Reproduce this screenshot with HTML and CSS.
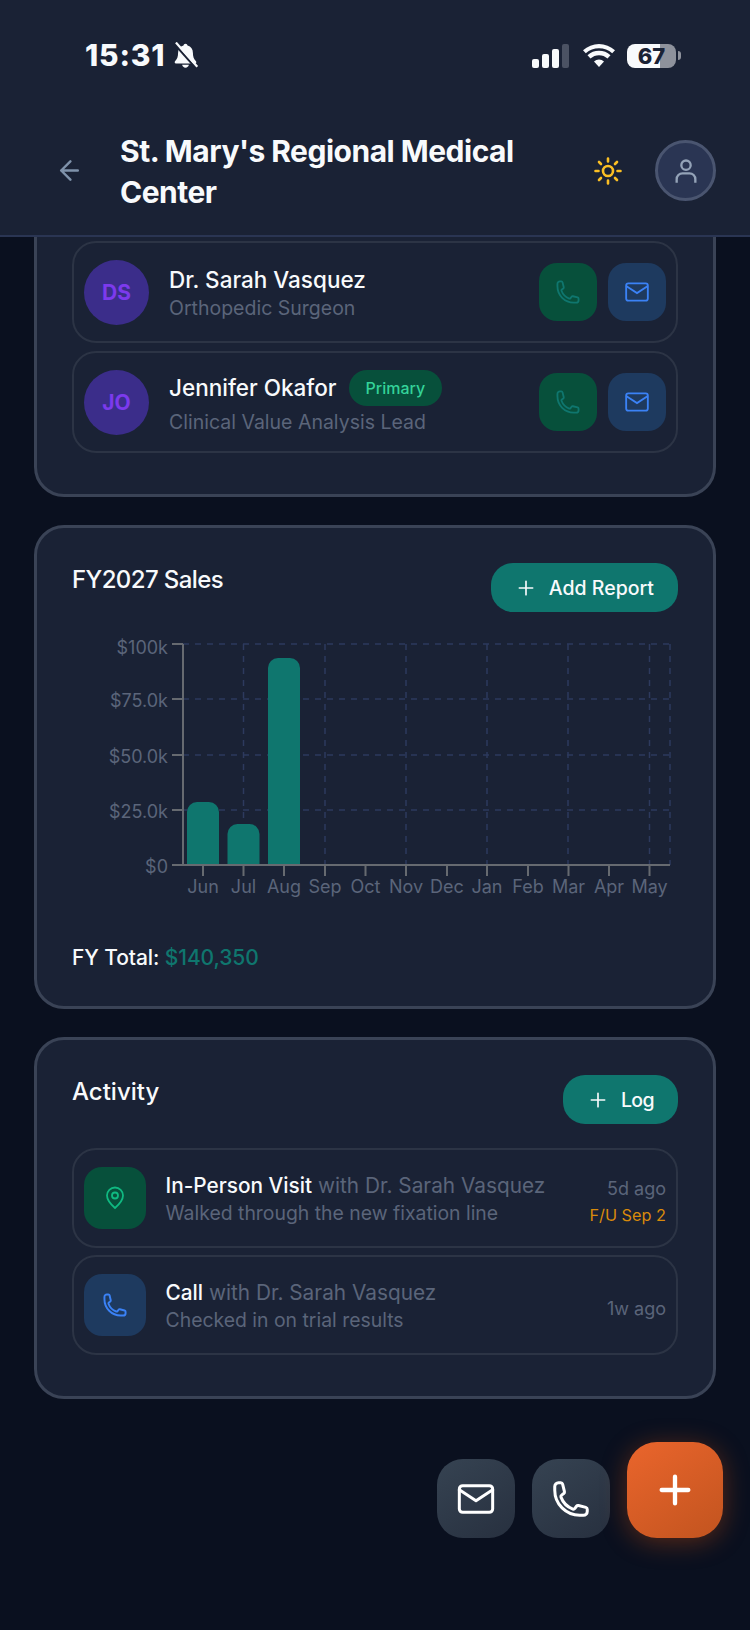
FILE: index.html
```html
<!DOCTYPE html>
<html lang="en">
<head>
    <meta charset="UTF-8">
    <meta name="viewport" content="width=device-width, initial-scale=1.0">
    <title>St. Mary's Regional Medical Center</title>
    <link rel="stylesheet" href="styles.css">
</head>
<body>
    <svg class="icon-defs" aria-hidden="true">
        <symbol id="i-phone" viewBox="0 0 24 24">
            <path d="M2.25 6.75c0 8.284 6.716 15 15 15h2.25a2.25 2.25 0 0 0 2.25-2.25v-1.372c0-.516-.351-.966-.852-1.091l-4.423-1.106c-.44-.11-.902.055-1.173.417l-.97 1.293c-.282.376-.769.542-1.21.38a12.035 12.035 0 0 1-7.143-7.143c-.162-.441.004-.928.38-1.21l1.293-.97c.363-.271.527-.734.417-1.173L6.963 3.102a1.125 1.125 0 0 0-1.091-.852H4.5A2.25 2.25 0 0 0 2.25 4.5v2.25Z"/>
        </symbol>
        <symbol id="i-mail" viewBox="0 0 24 24">
            <rect x="2" y="4" width="20" height="16" rx="2"/>
            <path d="M2 6.5l10 6.5 10-6.5"/>
        </symbol>
        <symbol id="i-plus" viewBox="0 0 24 24">
            <path d="M12 4v16M4 12h16"/>
        </symbol>
    </svg>

    <header class="app-header">
        <div class="status-bar">
            <div class="status-left">
                <span class="status-time">15:31</span>
                <svg class="bell-off" viewBox="0 0 24 24">
                    <path d="M12 1.500c-1 0-1.700.7-1.800 1.700C7 4 5.400 6.600 5.400 9.800c0 3.400-.8 5.400-2.700 7.300-.7.7-.3 1.900.8 1.900h17c1.100 0 1.500-1.200.8-1.900-1.900-1.900-2.700-3.900-2.700-7.300 0-3.200-1.600-5.800-4.800-6.600-.1-1-.8-1.700-1.800-1.700zM9 20.200c.3 1.500 1.500 2.600 3 2.600s2.700-1.100 3-2.600z"/>
                    <path class="bell-gap" d="M2 1.500l19 21.500"/>
                    <path class="bell-slash" d="M3.500 .5l19 21.500"/>
                </svg>
            </div>
            <div class="status-right">
                <svg class="signal" viewBox="0 0 37 24">
                    <rect x="0" y="15" width="7" height="9" rx="2"/>
                    <rect x="10" y="10" width="7" height="14" rx="2"/>
                    <rect x="20" y="5" width="7" height="19" rx="2"/>
                    <rect class="signal-off" x="30" y="0" width="7" height="24" rx="2"/>
                </svg>
                <svg class="wifi" viewBox="0 0 32 23">
                    <path d="M16 23l-5-5.500a7.500 7.500 0 0 1 10 0z"/>
                    <path d="M7.500 14.500l-3-3.300a17 17 0 0 1 23 0l-3 3.300a12.500 12.500 0 0 0-17 0z"/>
                    <path d="M2.800 9.300L0 6.200a24 24 0 0 1 32 0l-2.800 3.100a20 20 0 0 0-26.400 0z"/>
                </svg>
                <div class="battery"><span class="battery-level">67</span><span class="battery-nub"></span></div>
            </div>
        </div>
        <div class="nav-bar">
            <svg class="back-icon" viewBox="0 0 24 24">
                <path d="M21.500 12H2.500M13 1.500L2.500 12 13 22.500"/>
            </svg>
            <h1 class="nav-title">St. Mary's Regional Medical Center</h1>
            <svg class="sun-icon" viewBox="0 0 28 28">
                <circle cx="14" cy="14" r="5"/>
                <path d="M14 1.500v3M14 23.500v3M1.500 14h3M23.500 14h3M5 5l2 2M21 21l2 2M5 23l2-2M21 7l2-2"/>
            </svg>
            <div class="profile-btn">
                <svg viewBox="0 0 24 24">
                    <circle cx="12" cy="7" r="4"/>
                    <path d="M4 22v-3a5 5 0 0 1 5-5h6a5 5 0 0 1 5 5v3"/>
                </svg>
            </div>
        </div>
    </header>

    <main class="content">
        <section class="card card-scrolled">
            <div class="list list-tight">
                <div class="contact-row">
                    <div class="avatar">DS</div>
                    <div class="contact-info">
                        <div class="contact-name">Dr. Sarah Vasquez</div>
                        <div class="contact-role">Orthopedic Surgeon</div>
                    </div>
                    <div class="action-btn action-green"><svg><use href="#i-phone"/></svg></div>
                    <div class="action-btn action-blue"><svg><use href="#i-mail"/></svg></div>
                </div>
                <div class="contact-row">
                    <div class="avatar">JO</div>
                    <div class="contact-info">
                        <div class="contact-name">Jennifer Okafor <span class="badge">Primary</span></div>
                        <div class="contact-role">Clinical Value Analysis Lead</div>
                    </div>
                    <div class="action-btn action-green"><svg><use href="#i-phone"/></svg></div>
                    <div class="action-btn action-blue"><svg><use href="#i-mail"/></svg></div>
                </div>
            </div>
        </section>

        <section class="card">
            <div class="card-head">
                <h2 class="card-title card-title-tight">FY2027 Sales</h2>
                <div class="add-btn"><svg><use href="#i-plus"/></svg>Add Report</div>
            </div>
            <svg class="chart" width="606" height="300" viewBox="0 0 606 300">
                <g class="grid">
                    <path d="M111 14H598M111 69H598M111 125H598M111 180H598"/>
                    <path d="M171.500 14V235M253 14V235M334 14V235M415 14V235M496 14V235M577.500 14V235M598 14V235"/>
                </g>
                <g class="bars">
                    <path d="M115 235V182a10 10 0 0 1 10-10h12a10 10 0 0 1 10 10v53z"/>
                    <path d="M155.500 235V204a10 10 0 0 1 10-10h12a10 10 0 0 1 10 10v31z"/>
                    <path d="M196 235V38a10 10 0 0 1 10-10h12a10 10 0 0 1 10 10v197z"/>
                </g>
                <path class="axis" d="M111 14V235H598M100 14H111M100 69H111M100 125H111M100 180H111M100 235H111M131 235V246M171.500 235V246M212 235V246M253 235V246M293.500 235V246M334 235V246M375 235V246M415 235V246M456 235V246M496.500 235V246M537 235V246M577.500 235V246"/>
                <g class="y-labels">
                    <text x="96" y="24">$100k</text>
                    <text x="96" y="77">$75.0k</text>
                    <text x="96" y="133">$50.0k</text>
                    <text x="96" y="188">$25.0k</text>
                    <text x="96" y="243">$0</text>
                </g>
                <g class="x-labels">
                    <text x="131" y="263">Jun</text>
                    <text x="171.500" y="263">Jul</text>
                    <text x="212" y="263">Aug</text>
                    <text x="253" y="263">Sep</text>
                    <text x="293.500" y="263">Oct</text>
                    <text x="334" y="263">Nov</text>
                    <text x="375" y="263">Dec</text>
                    <text x="415" y="263">Jan</text>
                    <text x="456" y="263">Feb</text>
                    <text x="496.500" y="263">Mar</text>
                    <text x="537" y="263">Apr</text>
                    <text x="577.500" y="263">May</text>
                </g>
            </svg>
            <div class="fy-total">FY Total: <span class="fy-value">$140,350</span></div>
        </section>

        <section class="card">
            <div class="card-head card-head-list">
                <h2 class="card-title">Activity</h2>
                <div class="add-btn add-btn-log"><svg><use href="#i-plus"/></svg>Log</div>
            </div>
            <div class="list list-activity">
                <div class="activity-row">
                    <div class="activity-tile action-green">
                        <svg class="pin-icon" viewBox="0 0 24 24">
                            <path d="M12 22s8-7 8-12.500a8 8 0 0 0-16 0C4 15 12 22 12 22z"/>
                            <circle cx="12" cy="9.500" r="3"/>
                        </svg>
                    </div>
                    <div class="activity-info">
                        <div class="activity-title"><strong>In-Person Visit</strong> with Dr. Sarah Vasquez</div>
                        <div class="activity-note">Walked through the new fixation line</div>
                    </div>
                    <div class="activity-meta">
                        <div>5d ago</div>
                        <div class="followup">F/U Sep 2</div>
                    </div>
                </div>
                <div class="activity-row">
                    <div class="activity-tile action-blue"><svg class="tile-phone"><use href="#i-phone"/></svg></div>
                    <div class="activity-info">
                        <div class="activity-title"><strong>Call</strong> with Dr. Sarah Vasquez</div>
                        <div class="activity-note">Checked in on trial results</div>
                    </div>
                    <div class="activity-meta">
                        <div>1w ago</div>
                    </div>
                </div>
            </div>
        </section>
    </main>

    <div class="fab-group">
        <div class="fab"><svg><use href="#i-mail"/></svg></div>
        <div class="fab"><svg><use href="#i-phone"/></svg></div>
        <div class="fab fab-main"><svg><use href="#i-plus"/></svg></div>
    </div>
</body>
</html>
```

FILE: styles.css
```css
* {
    box-sizing: border-box;
}

html, body {
    margin: 0;
    height: 1630px;
    overflow: hidden;
}

body {
    position: relative;
    background-color: #0a101f;
    color: #f8fafc;
    font-family: 'Inter', 'Liberation Sans', sans-serif;
}

.icon-defs {
    display: none;
}

/* header */
.app-header {
    position: relative;
    z-index: 2;
    height: 237px;
    padding: 43px 34px 0 59px;
    background-color: #1a2235;
    border-bottom: 2px solid #2a3553;
}

.status-bar {
    display: flex;
    justify-content: space-between;
    height: 25px;
    padding: 0 35px 0 26px;
}

.status-left, .status-right {
    display: flex;
    align-items: center;
}

.status-time {
    font-size: 30px;
    font-weight: 800;
    letter-spacing: 0.8px;
    line-height: 25px;
}

.bell-off {
    width: 27px;
    height: 27px;
    margin-left: 7px;
    fill: #f8fafc;
}

.bell-gap {
    stroke: #1a2235;
    stroke-width: 2;
}

.bell-slash {
    stroke: #f8fafc;
    stroke-width: 2;
}

.signal {
    width: 37px;
    height: 24px;
    fill: #f8fafc;
}

.signal-off {
    fill: #4b5263;
}

.wifi {
    width: 32px;
    height: 23px;
    margin-left: 14px;
    fill: #f8fafc;
}

.battery {
    display: flex;
    align-items: center;
    margin-left: 12px;
}

.battery-level {
    width: 49px;
    height: 24px;
    border-radius: 8px;
    background: linear-gradient(90deg, #f8fafc 67%, #8e929c 67%);
    color: #1a2235;
    font-size: 22px;
    font-weight: 800;
    line-height: 24px;
    text-align: center;
}

.battery-nub {
    width: 3px;
    height: 9px;
    margin-left: 2px;
    border-radius: 0 3px 3px 0;
    background-color: #8e929c;
}

.nav-bar {
    display: flex;
    align-items: center;
    height: 61px;
    margin-top: 72px;
}

.back-icon {
    flex: none;
    width: 21px;
    height: 21px;
    fill: none;
    stroke: #7f92aa;
    stroke-width: 2.8;
    stroke-linecap: round;
    stroke-linejoin: round;
}

.nav-title {
    flex: 1;
    margin: 2px 40px 0 40px;
    font-size: 30px;
    font-weight: 700;
    line-height: 41px;
    letter-spacing: -0.5px;
}

.sun-icon {
    flex: none;
    width: 28px;
    height: 28px;
    fill: none;
    stroke: #fbbf24;
    stroke-width: 2.6;
    stroke-linecap: round;
}

.profile-btn {
    display: flex;
    flex: none;
    align-items: center;
    justify-content: center;
    width: 61px;
    height: 61px;
    margin-left: 33px;
    border: 3px solid #4a5570;
    border-radius: 50%;
    background-color: #2a3553;
}

.profile-btn svg {
    width: 28px;
    height: 28px;
    fill: none;
    stroke: #94a3b8;
    stroke-width: 2;
}

/* cards */
.content {
    display: flex;
    flex-direction: column;
    gap: 28px;
    padding: 0 34px;
}

.card {
    padding: 35px;
    border: 3px solid #3a4356;
    border-radius: 30px;
    background-color: #1a2235;
}

.card-scrolled {
    margin-top: -40px;
    padding-top: 41px;
}

.card-head {
    display: flex;
    align-items: flex-start;
    justify-content: space-between;
}

.card-head-list {
    margin-bottom: 24px;
}

.card-title {
    margin: 0;
    font-size: 24px;
    font-weight: 500;
    line-height: 34px;
}

.card-title-tight {
    letter-spacing: -0.6px;
}

.add-btn {
    display: flex;
    align-items: center;
    gap: 13px;
    height: 49px;
    padding: 0 24px 0 25px;
    border-radius: 22px;
    background-color: #0f766e;
    font-size: 19.5px;
    font-weight: 500;
}

.add-btn-log {
    letter-spacing: -0.6px;
}

.add-btn svg {
    width: 20px;
    height: 20px;
    fill: none;
    stroke: #f8fafc;
    stroke-width: 2;
    stroke-linecap: round;
}

.list {
    display: flex;
    flex-direction: column;
    gap: 9px;
    margin-bottom: 6px;
}

.list-tight {
    gap: 8px;
}

.list-activity {
    gap: 7px;
}

/* contacts */
.contact-row {
    display: flex;
    align-items: center;
    height: 102px;
    padding: 0 10px;
    border: 2px solid #2c3445;
    border-radius: 24px;
}

.avatar {
    display: flex;
    flex: none;
    align-items: center;
    justify-content: center;
    width: 65px;
    height: 65px;
    border-radius: 50%;
    background-color: #3b2d8a;
    color: #7c3aed;
    font-size: 21px;
    font-weight: 700;
}

.contact-info {
    flex: 1;
    margin-left: 20px;
}

.contact-name {
    font-size: 22.5px;
    font-weight: 500;
    line-height: 31px;
}

.contact-role {
    color: #5b657a;
    font-size: 19.5px;
    line-height: 26px;
}

.badge {
    display: inline-block;
    margin-left: 6px;
    margin-bottom: 3px;
    padding: 0 17px;
    border-radius: 18px;
    background-color: #07503b;
    color: #34d399;
    font-size: 16px;
    line-height: 36px;
    vertical-align: middle;
}

.action-btn {
    display: flex;
    flex: none;
    align-items: center;
    justify-content: center;
    width: 58px;
    height: 58px;
    margin-left: 11px;
    border-radius: 18px;
}

.action-btn svg {
    width: 26px;
    height: 26px;
    fill: none;
    stroke-width: 1.7;
}

.action-green {
    background-color: #07503b;
    stroke: #0f766e;
}

.action-blue {
    background-color: #1e3a5f;
    stroke: #3b82f6;
}

/* chart */
.chart {
    display: block;
    margin: 18px 0 15px;
    font-size: 18px;
}

.grid {
    fill: none;
    stroke: #2d3a5e;
    stroke-width: 1.5;
    stroke-dasharray: 6 6;
}

.bars {
    fill: #0f766e;
}

.axis {
    fill: none;
    stroke: #666a70;
    stroke-width: 2;
}

.y-labels {
    fill: #5b657a;
    text-anchor: end;
}

.x-labels {
    fill: #5b657a;
    text-anchor: middle;
}

.fy-total {
    font-size: 21px;
    font-weight: 500;
    line-height: 26px;
    letter-spacing: -0.1px;
}

.fy-value {
    color: #0f766e;
}

/* activity */
.activity-row {
    display: flex;
    align-items: center;
    height: 100px;
    padding: 0 10px;
    border: 2px solid #2c3445;
    border-radius: 24px;
}

.activity-tile {
    display: flex;
    flex: none;
    align-items: center;
    justify-content: center;
    width: 62px;
    height: 62px;
    border-radius: 18px;
}

.pin-icon {
    width: 24px;
    height: 24px;
    fill: none;
    stroke: #10b981;
    stroke-width: 1.8;
}

.tile-phone {
    width: 26px;
    height: 26px;
    fill: none;
    stroke-width: 1.8;
}

.activity-info {
    flex: 1;
    margin-left: 19.5px;
    padding-top: 3px;
}

.activity-title {
    color: #5b657a;
    font-size: 20.8px;
    line-height: 27px;
}

.activity-title strong {
    color: #f8fafc;
    font-weight: 500;
}

.activity-note {
    color: #5b657a;
    font-size: 19.4px;
    line-height: 28px;
}

.activity-meta {
    padding-top: 8px;
    color: #5b657a;
    font-size: 18px;
    line-height: 26px;
    text-align: right;
}

.followup {
    color: #d98a0b;
    font-size: 16.3px;
}

/* floating buttons */
.fab-group {
    position: absolute;
    right: 27px;
    bottom: 92px;
    display: flex;
    align-items: flex-end;
    gap: 17px;
}

.fab {
    display: flex;
    align-items: center;
    justify-content: center;
    width: 78px;
    height: 79px;
    border-radius: 26px;
    background: linear-gradient(145deg, #364352, #27303f);
}

.fab svg {
    width: 40px;
    height: 40px;
    fill: none;
    stroke: #fff;
    stroke-width: 1.8;
    stroke-linecap: round;
    stroke-linejoin: round;
}

.fab-main {
    width: 96px;
    height: 96px;
    border-radius: 30px;
    background: linear-gradient(145deg, #ea652c, #c2541f);
    box-shadow: 0 4px 26px rgba(234, 88, 12, 0.35);
}

.fab-main svg {
    stroke-width: 2.6;
}
```
